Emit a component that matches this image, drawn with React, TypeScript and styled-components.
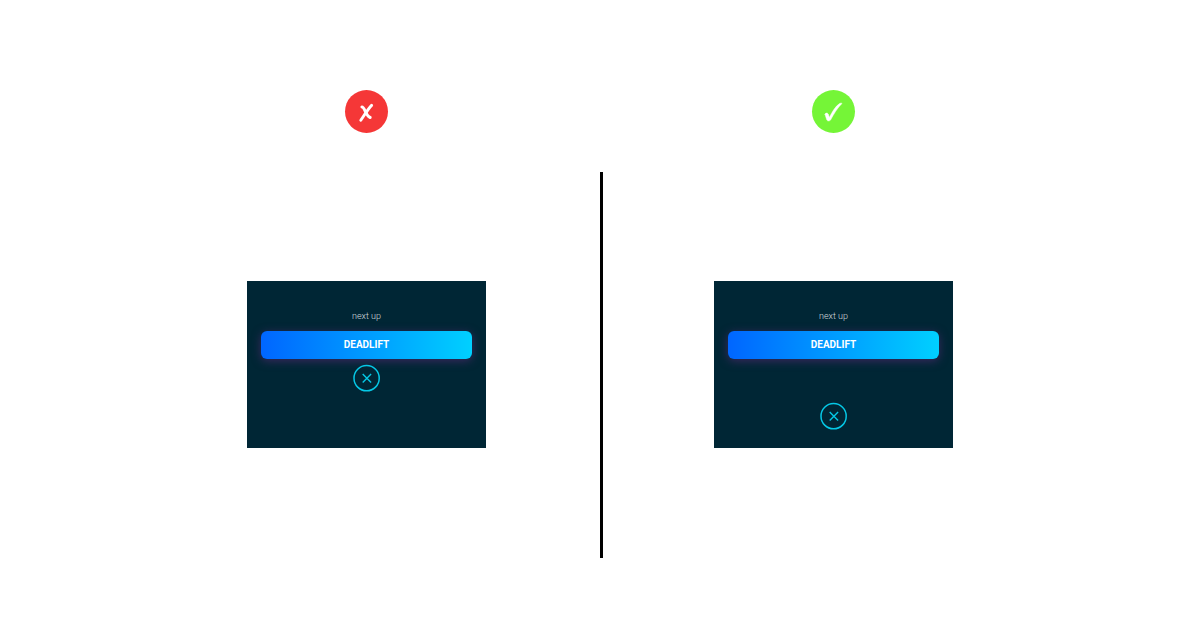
import React from "react";
import styled, { createGlobalStyle } from "styled-components";

const GlobalStyle = createGlobalStyle`
  *, *::before, *::after { box-sizing: border-box; }
  body {
    margin: 0;
    background: #ffffff;
    font-family: Roboto, "Liberation Sans", sans-serif;
  }
`;

const Comparison = styled.main`
  display: grid;
  grid-template-columns: 1fr 0 1fr;
  width: 100%;
  max-width: 1200px;
  min-height: 100vh;
  margin: 0 auto;
  padding: 90px 133px 72px;
`;

const Example = styled.section`
  display: flex;
  flex-direction: column;
  align-items: center;
  gap: 148px;
`;

const Divider = styled.div`
  width: 3px;
  margin-top: 82px;
  background: #000000;
`;

const Verdict = styled.span<{ $good: boolean }>`
  width: 43px;
  height: 43px;
  border-radius: 50%;
  background: ${(p) => (p.$good ? "#75f537" : "#f53737")};

  svg {
    display: block;
    fill: #ffffff;
    stroke: #ffffff;
    stroke-linejoin: round;
    stroke-linecap: round;
  }
`;

const Screen = styled.div`
  display: flex;
  flex-direction: column;
  align-items: center;
  width: 239px;
  min-height: 167px;
  padding: 28px 14px 18px;
  background: #002635;
`;

const Label = styled.p`
  margin: 0 0 8px;
  color: #d3dbde;
  font-size: 9px;
  font-weight: 300;
  line-height: 14px;
`;

const ExerciseButton = styled.button`
  width: 100%;
  height: 28px;
  padding: 0;
  border: 0;
  border-radius: 6px;
  background: linear-gradient(90deg, #0066ff, #00d0ff);
  box-shadow: 0 2px 10px rgba(98, 42, 124, 0.6);
  color: #ffffff;
  font-family: inherit;
  font-size: 10px;
  font-weight: 700;
  line-height: 12px;
`;

const CloseButton = styled.button<{ $spaced: boolean }>`
  display: grid;
  place-items: center;
  width: 27px;
  height: 27px;
  margin-top: ${(p) => (p.$spaced ? "auto" : "6px")};
  padding: 0;
  border: 0;
  background: transparent;

  svg {
    display: block;
    overflow: visible;
    fill: none;
    stroke: #05c8e6;
  }
`;

const CrossMark = () => (
  <svg width="43" height="43" viewBox="0 0 43 43" aria-hidden="true">
    <path d="M26.6 15.4C23.4 18.6 20.2 23.8 15.8 30.3" fill="none" strokeWidth="2.9" />
    <path d="M16.9 17C19.7 16.8 20.6 25.6 25.2 27.5" fill="none" strokeWidth="3" />
  </svg>
);

const CheckMark = () => (
  <svg width="43" height="43" viewBox="0 0 43 43" strokeWidth="0.5" aria-hidden="true">
    <path d="M13.1 24.4C13 23 15.4 22.5 16.2 24C16.7 25 16.9 26.1 17.3 27.5C20.1 22.1 23.3 16.3 27.6 13.5C28.5 13.1 29.5 13 30 13.5C25.6 17.5 21.7 24.2 18.5 30.1C18 31 15.3 31.3 14.9 30.1C14.3 28.3 13.6 26.3 13.1 24.4Z" />
  </svg>
);

interface ExampleProps {
  title: string;
  good?: boolean;
}

const WorkoutExample = ({ title, good = false }: ExampleProps) => (
  <Example aria-label={title}>
    <Verdict $good={good} role="img" aria-label={title}>
      {good ? <CheckMark /> : <CrossMark />}
    </Verdict>
    <Screen>
      <Label>next up</Label>
      <ExerciseButton type="button">DEADLIFT</ExerciseButton>
      <CloseButton type="button" aria-label="Close" $spaced={good}>
        <svg width="27" height="27" viewBox="0 0 27 27" aria-hidden="true">
          <circle cx="13.6" cy="13.2" r="12.6" strokeWidth="1.5" />
          <path d="M9.7 9.1L18.1 17.5M18.1 9.1L9.7 17.5" strokeWidth="1.4" />
        </svg>
      </CloseButton>
    </Screen>
  </Example>
);

export default function App() {
  return (
    <>
      <GlobalStyle />
      <Comparison>
        <WorkoutExample title="Incorrect" />
        <Divider />
        <WorkoutExample title="Correct" good />
      </Comparison>
    </>
  );
}
